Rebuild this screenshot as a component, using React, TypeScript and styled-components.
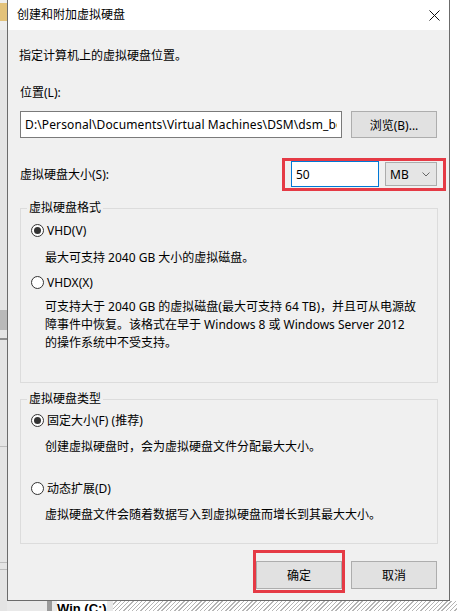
import React from 'react';
import styled, { createGlobalStyle } from 'styled-components';

const GlobalStyle = createGlobalStyle`
  html, body { margin: 0; padding: 0; }
  body {
    width: 457px;
    height: 611px;
    overflow: hidden;
    background: #ffffff;
    font-family: "Noto Sans", "Noto Sans CJK SC", sans-serif;
    font-size: 12px;
    color: #000;
  }
`;

const Desktop = styled.div`
  display: grid;
  grid-template-columns: 7px 443px 7px;
  grid-template-rows: 601px 10px;
  width: 457px;
  height: 611px;
  overflow: hidden;
`;

const SideStrip = styled.div<{ $bg: string }>`
  grid-row: 1 / 3;
  display: flex;
  flex-direction: column;
  background: ${p => p.$bg};
  overflow: hidden;
`;

const Band = styled.div<{ $h: number; $bg: string }>`
  flex: 0 0 ${p => p.$h}px;
  background: ${p => p.$bg};
`;

const PeekLine = styled.div`
  flex: 0 0 15px;
  font-family: "Liberation Sans", "Noto Sans CJK SC", sans-serif;
  font-size: 10px;
  line-height: 15px;
  color: #333;
  white-space: nowrap;
`;

const BottomStrip = styled.div`
  grid-column: 2 / 4;
  grid-row: 2;
  display: flex;
  align-items: flex-start;
  overflow: hidden;
  background: #e9e9e9;
`;

const DriveBlock = styled.div`
  width: 5px;
  height: 10px;
  margin-left: 40px;
  background: #9a9a9a;
`;

const DriveLabel = styled.div`
  margin: 0 6px 0 5px;
  font-family: "Liberation Sans", sans-serif;
  font-weight: bold;
  font-size: 13px;
  line-height: 13px;
  padding-top: 1px;
  background: #fff;
`;

const Hatch = styled.div`
  flex: 1;
  height: 10px;
  background: repeating-linear-gradient(135deg, #ffffff 0 2px, #b5b5b5 2px 3px);
`;

const Window = styled.div`
  display: flex;
  flex-direction: column;
  border: 1px solid #6b6b6b;
  border-top: none;
  background: #f0f0f0;
  min-height: 0;
`;

const TitleBar = styled.div`
  flex: 0 0 30px;
  display: flex;
  align-items: center;
  padding-left: 9px;
  background: #ffffff;
`;

const Title = styled.div`
  flex: 1;
  line-height: 16px;
`;

const CloseButton = styled.div`
  width: 30px;
  height: 30px;
  display: flex;
  align-items: center;
  justify-content: center;
`;

const Body = styled.div`
  display: flex;
  flex-direction: column;
  padding: 0 12px;
`;

const Intro = styled.div`
  margin: 18px 0 0 -1px;
  line-height: 16px;
`;

const FieldLabel = styled.div`
  margin-top: 21px;
  line-height: 16px;
`;

const PathRow = styled.div`
  display: flex;
  gap: 9px;
  height: 27px;
  margin-top: 10px;
`;

const TextBox = styled.input<{ $focused?: boolean; $w?: number; $track?: number }>`
  box-sizing: border-box;
  ${p => (p.$w ? `width: ${p.$w}px; height: 26px;` : 'flex: 1; height: 100%;')}
  min-width: 0;
  border: 1px solid ${p => (p.$focused ? '#0078d7' : '#7a7a7a')};
  background: #ffffff;
  padding: 0 4px;
  font: inherit;
  letter-spacing: ${p => p.$track ?? 0}px;
  color: #000;
  outline: none;
`;

const PushButton = styled.button<{ $mb?: number }>`
  box-sizing: border-box;
  width: 86px;
  height: ${p => (p.$mb !== undefined ? '28px' : '100%')};
  margin-bottom: ${p => p.$mb ?? 0}px;
  padding: 0;
  background: #e1e1e1;
  border: 1px solid #adadad;
  font: inherit;
  color: #000;
`;

const SizeRow = styled.div`
  display: flex;
  align-items: center;
  margin: 20px -9px 0 0;
`;

const SizeLabel = styled.div`
  flex: 1;
  line-height: 16px;
`;

const Highlight = styled.div<{ $pad: string }>`
  display: flex;
  align-items: flex-start;
  gap: 6px;
  border: 3px solid #e53a45;
  padding: ${p => p.$pad};
`;

const Combo = styled.div`
  box-sizing: border-box;
  width: 52px;
  height: 24px;
  margin-top: 1px;
  display: flex;
  align-items: center;
  justify-content: space-between;
  padding: 0 6px 0 4px;
  background: #e5e5e5;
  border: 1px solid #acacac;
`;

const Group = styled.fieldset<{ $mt: number; $pt: number; $pb: number }>`
  margin: ${p => p.$mt}px -1px 0 0;
  padding: ${p => p.$pt}px 10px ${p => p.$pb}px 10px;
  border: 1px solid #dcdcdc;
  min-width: 0;
`;

const GroupTitle = styled.legend`
  margin-left: -4px;
  padding: 0 2px;
  line-height: 16px;
`;

const RadioRow = styled.label<{ $mt?: number }>`
  display: flex;
  align-items: center;
  gap: 3px;
  height: 16px;
  margin-top: ${p => p.$mt ?? 0}px;
`;

const RadioMark = styled.span<{ $checked?: boolean }>`
  box-sizing: border-box;
  width: 13px;
  height: 13px;
  border-radius: 50%;
  border: 1px solid #333;
  background: #fff;
  display: flex;
  align-items: center;
  justify-content: center;
  &::after {
    content: '';
    width: 7px;
    height: 7px;
    border-radius: 50%;
    background: ${p => (p.$checked ? '#333' : 'transparent')};
  }
`;

const Note = styled.div<{ $mt: number; $lh?: number }>`
  margin: ${p => p.$mt}px 0 0 14px;
  line-height: ${p => p.$lh ?? 16}px;
`;

const ButtonRow = styled.div`
  display: flex;
  justify-content: flex-end;
  align-items: flex-end;
  gap: 6px;
  margin-top: 6px;
`;

function Radio({ checked, label, mt }: { checked?: boolean; label: string; mt?: number }) {
  return (
    <RadioRow $mt={mt}>
      <RadioMark $checked={checked} />
      {label}
    </RadioRow>
  );
}

export default function App() {
  return (
    <>
      <GlobalStyle />
      <Desktop>
        <SideStrip $bg="#e4e4e4">
          <Band $h={3} $bg="#eeeeee" />
          <Band $h={18} $bg="#e3c27a" />
          <Band $h={9} $bg="#eeeeee" />
          <Band $h={280} $bg="#e4e4e4" />
          <Band $h={20} $bg="#b9b9b9" />
          <Band $h={8} $bg="#e4e4e4" />
          <Band $h={2} $bg="#8c8c8c" />
          <Band $h={106} $bg="#e4e4e4" />
          <Band $h={1} $bg="#bdbdbd" />
          <Band $h={115} $bg="#e4e4e4" />
          <Band $h={1} $bg="#bdbdbd" />
          <Band $h={6} $bg="#e4e4e4" />
          <Band $h={1} $bg="#bdbdbd" />
        </SideStrip>

        <Window>
          <TitleBar>
            <Title>创建和附加虚拟硬盘</Title>
            <CloseButton>
              <svg width="11" height="11" viewBox="0 0 11 11">
                <path d="M0.5 0.5 L10.5 10.5 M10.5 0.5 L0.5 10.5" stroke="#111" strokeWidth="1" fill="none" />
              </svg>
            </CloseButton>
          </TitleBar>

          <Body>
            <Intro>指定计算机上的虚拟硬盘位置。</Intro>
            <FieldLabel>位置(L):</FieldLabel>
            <PathRow>
              <TextBox
                readOnly
                $track={0.12}
                value={'D:\\Personal\\Documents\\Virtual Machines\\DSM\\dsm_boot.vhd'}
              />
              <PushButton>浏览(B)...</PushButton>
            </PathRow>

            <SizeRow>
              <SizeLabel>虚拟硬盘大小(S):</SizeLabel>
              <Highlight $pad="0 6px 1px 6px">
                <TextBox readOnly value="50" $focused $w={88} />
                <Combo>
                  MB
                  <svg width="8" height="5" viewBox="0 0 8 5">
                    <path d="M0.5 0.5 L4 4 L7.5 0.5" stroke="#666" strokeWidth="1" fill="none" />
                  </svg>
                </Combo>
              </Highlight>
            </SizeRow>

            <Group $mt={9} $pt={6} $pb={30}>
              <GroupTitle>虚拟硬盘格式</GroupTitle>
              <Radio checked label="VHD(V)" />
              <Note $mt={12}>最大可支持 2040 GB 大小的虚拟磁盘。</Note>
              <Radio label="VHDX(X)" mt={8} />
              <Note $mt={8} $lh={18}>
                可支持大于 2040 GB 的虚拟磁盘(最大可支持 64 TB)，并且可从电源故
                <br />
                障事件中恢复。该格式在早于 Windows 8 或 Windows Server 2012
                <br />
                的操作系统中不受支持。
              </Note>
            </Group>

            <Group $mt={8} $pt={5} $pb={20}>
              <GroupTitle>虚拟硬盘类型</GroupTitle>
              <Radio checked label="固定大小(F) (推荐)" />
              <Note $mt={11}>创建虚拟硬盘时，会为虚拟硬盘文件分配最大大小。</Note>
              <Radio label="动态扩展(D)" mt={25} />
              <Note $mt={11}>虚拟硬盘文件会随着数据写入到虚拟硬盘而增长到其最大大小。</Note>
            </Group>

            <ButtonRow>
              <Highlight $pad="8px 0 1px 0">
                <PushButton $mb={0}>确定</PushButton>
              </Highlight>
              <PushButton $mb={4}>取消</PushButton>
            </ButtonRow>
          </Body>
        </Window>

        <SideStrip $bg="#ffffff">
          <Band $h={30} $bg="#f2f2f2" />
          <PeekLine>客</PeekLine>
          <PeekLine>1</PeekLine>
          <PeekLine>C</PeekLine>
          <PeekLine>C</PeekLine>
          <Band $h={200} $bg="#ffffff" />
          <Band $h={7} $bg="#d2d2d2" />
          <Band $h={55} $bg="#ffffff" />
          <Band $h={17} $bg="#14148c" />
          <Band $h={94} $bg="#ffffff" />
          <Band $h={18} $bg="#1e1ee6" />
          <Band $h={82} $bg="#ffffff" />
          <Band $h={2} $bg="#3fa33f" />
        </SideStrip>

        <BottomStrip>
          <DriveBlock />
          <DriveLabel>Win (C:)</DriveLabel>
          <Hatch />
        </BottomStrip>
      </Desktop>
    </>
  );
}
